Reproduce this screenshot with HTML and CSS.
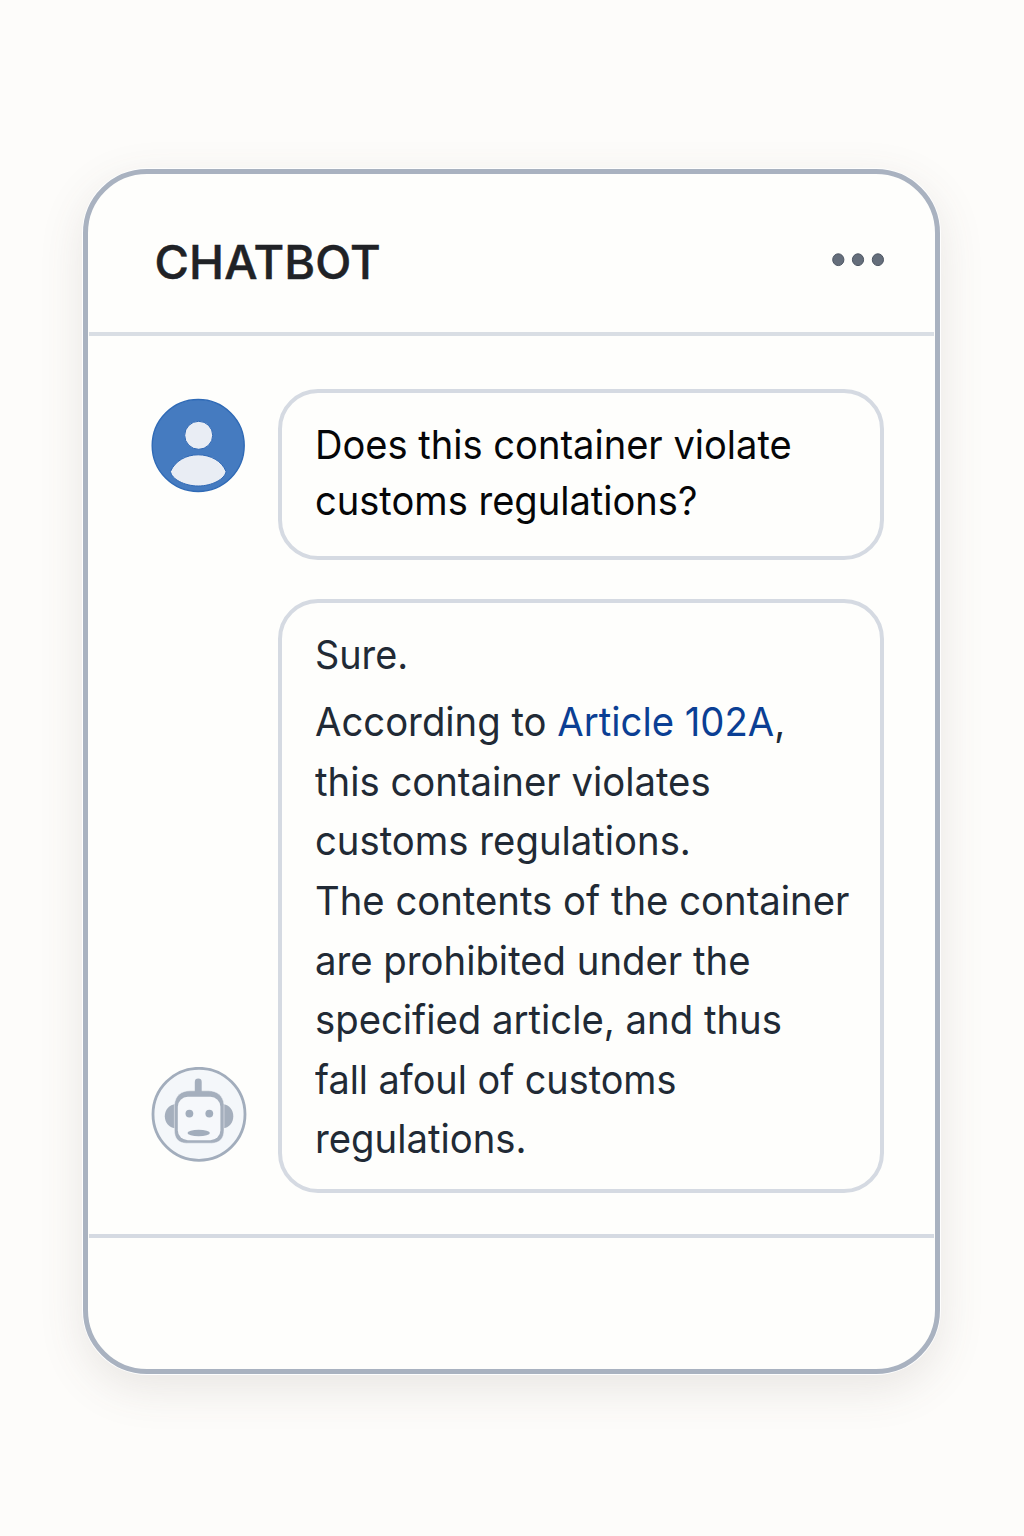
FILE: index.html
```html
<!DOCTYPE html>
<html lang="en">
<head>
<meta charset="utf-8">
<title>Chatbot</title>
<link rel="stylesheet" href="styles.css">
</head>
<body>
<main class="card">
  <header class="header">
    <h1 class="title">CHATBOT</h1>
    <svg class="menu" width="54" height="14" viewBox="0 0 54 14" aria-label="More">
      <g fill="#656e7b" stroke="#4d5663" stroke-width="1">
        <ellipse cx="7.3" cy="6.7" rx="5.6" ry="5.9"/>
        <ellipse cx="27" cy="6.7" rx="5.6" ry="5.9"/>
        <ellipse cx="46.9" cy="6.7" rx="5.6" ry="5.9"/>
      </g>
    </svg>
  </header>
  <section class="messages">
    <article class="message message-user">
      <svg class="avatar" viewBox="0 0 96 96" aria-label="User">
        <circle cx="47.2" cy="47.5" r="46" fill="#457bc0" stroke="#2f6ab6" stroke-width="1.4"/>
        <g fill="#e9edf4" stroke="#2f68b4" stroke-width="1">
          <circle cx="47.7" cy="37.3" r="14"/>
          <path d="M19.500 73.500C24 63 35 56.800 47.200 56.800S71 63 75 73.500C74 81 61 88 47.200 88S20.500 81 19.500 73.500Z"/>
        </g>
      </svg>
      <div class="bubble">
        <p class="text">
          <span class="line">Does this container violate</span>
          <span class="line">customs regulations?</span>
        </p>
      </div>
    </article>
    <article class="message message-bot">
      <svg class="avatar" viewBox="0 0 96 96" aria-label="Bot">
        <circle cx="48" cy="47.3" r="46" fill="#f4f7fa" stroke="#a2adbc" stroke-width="2.8"/>
        <g fill="#a5afbd">
          <path d="M25 37.300C18 37.300 13.800 43 13.800 49.300S18 61.300 25 61.300Z"/>
          <path d="M71.500 37.300C78.300 37.300 82.300 43 82.300 49.300S78.300 61.300 71.500 61.300Z"/>
        </g>
        <path d="M23.400 37.500C24.500 28.500 30 23.800 39 23.800H57.500C66 23.800 72 28.500 73 37.500V63C73 71.500 68.500 76.200 60.500 76.200H35.500C27.500 76.200 23.400 71.500 23.400 63Z" fill="#a5afbd" stroke="#f4f7fa" stroke-width=".5"/>
        <path d="M43.800 25V15a3.450 3.450 0 0 1 6.900 0V25Z" fill="#a5afbd"/>
        <rect x="26.800" y="29.800" width="42.600" height="43.500" rx="10" fill="#f6f8fb"/>
        <g fill="#a2adbc">
          <circle cx="38.400" cy="46.600" r="3.900"/>
          <circle cx="58.300" cy="46.600" r="3.900"/>
          <ellipse cx="47.700" cy="66" rx="11.200" ry="3.200"/>
        </g>
      </svg>
      <div class="bubble">
        <p class="text intro"><span class="line">Sure.</span></p>
        <p class="text">
          <span class="line">According to <a class="link">Article 102A</a>,</span>
          <span class="line">this container violates</span>
          <span class="line">customs regulations.</span>
          <span class="line">The contents of the container</span>
          <span class="line">are prohibited under the</span>
          <span class="line">specified article, and thus</span>
          <span class="line line-tight">fall afoul of customs</span>
          <span class="line">regulations.</span>
        </p>
      </div>
    </article>
  </section>
  <footer class="footer"></footer>
</main>
</body>
</html>
```
FILE: styles.css
```css
* { box-sizing: border-box; margin: 0; }

body {
  height: 1536px;
  padding: 169px 84px 0 83px;
  background: #fdfcfa;
  font-family: Inter, "Liberation Sans", sans-serif;
}

.card {
  display: flex;
  flex-direction: column;
  height: 1205px;
  border: 5px solid #a9b2c0;
  border-radius: 64px;
  background: #fefefc;
  box-shadow: 0 0 0 1px #fefefe, 0 14px 46px rgba(90, 80, 70, .13);
}

.header {
  display: flex;
  justify-content: space-between;
  align-items: center;
  height: 162px;
  margin: 0 1px;
  padding: 16px 49px 0 65.5px;
  border-bottom: 4px solid #d9dee4;
}

.title {
  font-size: 47px;
  font-weight: 500;
  letter-spacing: .1px;
  color: #202226;
  -webkit-text-stroke: .5px #202226;
}

.menu { margin-top: -2px; }

.messages {
  display: flex;
  flex-direction: column;
  gap: 39px;
  height: 898px;
  padding: 53px 51px 0 63px;
}

.message { display: flex; gap: 31px; }

.avatar {
  flex: none;
  width: 96px;
  height: 96px;
  margin-top: 9px;
}

.message-bot .avatar { align-self: flex-end; margin-bottom: 30px; }

.bubble {
  flex: 1;
  min-width: 0;
  height: 171px;
  padding: 24px 33px;
  border: 4px solid #d5dae2;
  border-radius: 40px;
}

.message-bot .bubble { height: 594px; padding-top: 22px; }

.text {
  font-size: 40px;
  line-height: 56px;
  color: #050608;
}

.line {
  display: block;
  white-space: nowrap;
  transform: scaleX(.952);
  transform-origin: left;
}

.message-bot .text { line-height: 59.6px; color: #212a35; }
.message-bot .intro { margin-bottom: 7.7px; }
.message-bot .line { transform: scaleX(.957); }
.message-bot .intro .line { transform: scaleX(.945); }
.message-bot .line-tight { transform: scaleX(.945); }

.link { color: #0b3f94; }

.footer {
  flex: 1;
  margin: 0 1px;
  border-top: 4px solid #d5dae2;
}
```
